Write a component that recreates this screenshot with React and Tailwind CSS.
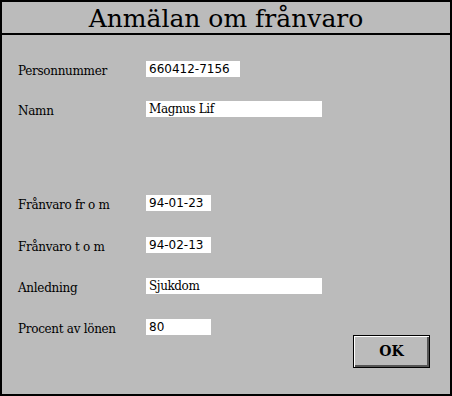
const fields = [
  { label: "Personnummer", value: "660412-7156", width: "w-[94px]", mono: true, gap: "mt-[26px]" },
  { label: "Namn", value: "Magnus Lif", width: "w-[176px]", gap: "mt-[24px]" },
  { label: "Frånvaro fr o m", value: "94-01-23", width: "w-[65px]", mono: true, gap: "mt-[78px]" },
  { label: "Frånvaro t o m", value: "94-02-13", width: "w-[65px]", mono: true, gap: "mt-[26px]" },
  { label: "Anledning", value: "Sjukdom", width: "w-[176px]", gap: "mt-[25px]" },
  { label: "Procent av lönen", value: "80", width: "w-[65px]", mono: true, gap: "mt-[25px]" },
]

const Field = ({ field }) => (
  <div className={`flex items-center h-4 ${field.gap}`}>
    <div className="w-[128px] pt-[3px] text-[12px] leading-none text-black [font-family:'DejaVu_Serif',serif] tracking-[-0.3px]">
      {field.label}
    </div>
    <div
      className={`${field.width} h-4 bg-white pl-[3px] flex items-center text-black leading-none ${
        field.mono ? "text-[12px] [font-family:'DejaVu_Sans',sans-serif]" : "text-[12px] [font-family:'DejaVu_Serif',serif] tracking-[-0.4px]"
      }`}
    >
      {field.value}
    </div>
  </div>
)

export default function App() {
  return (
    <div className="w-[452px] h-[396px] border-2 border-black bg-[#bbbbbb] flex flex-col">
      <div className="h-[33px] border-b-2 border-black flex items-center justify-center">
        <h1 className="text-[25px] leading-none text-black [font-family:'DejaVu_Serif',serif] pt-[1px]">
          Anmälan om frånvaro
        </h1>
      </div>
      <div className="pl-4 flex flex-col">
        {fields.map((f) => (
          <Field key={f.label} field={f} />
        ))}
        <div className="flex justify-end pr-[20px]">
          <button className="w-[77px] h-[33px] border border-black bg-[#bbbbbb] shadow-[inset_1px_1px_0_#ffffff,inset_-2px_-2px_0_#555555] flex items-center justify-center text-[14px] font-bold text-black [font-family:'DejaVu_Serif',serif]">
            OK
          </button>
        </div>
      </div>
    </div>
  )
}
